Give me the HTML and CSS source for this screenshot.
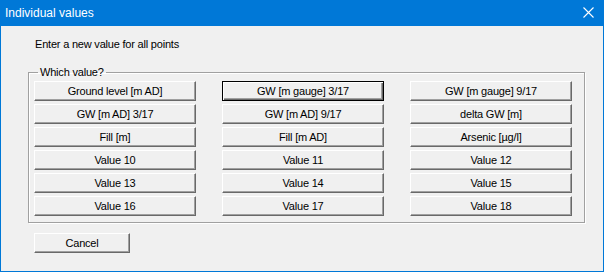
FILE: index.html
```html
<!DOCTYPE html>
<html lang="en">
  <head>
    <meta charset="UTF-8" />
    <meta name="viewport" content="width=device-width, initial-scale=1.0" />
    <title>Individual values</title>

    <link rel="stylesheet" href="styles.css">
  </head>
  <body>
    <!-- Dialog window -->
    <div class="window">
      <div class="titlebar">
        <span class="title">Individual values</span>
        <svg class="close" width="11" height="11" viewBox="0 0 11 11">
          <path d="M0.5 0.5 L10.5 10.5 M10.5 0.5 L0.5 10.5" stroke="#fff" stroke-width="1.1" fill="none" />
        </svg>
      </div>

      <div class="content">
        <p class="prompt">Enter a new value for all points</p>

        <!-- Group of value buttons -->
        <fieldset class="group">
          <legend>Which value?</legend>
          <div class="grid">
            <button class="btn">Ground level [m AD]</button>
            <button class="btn default">GW [m gauge] 3/17</button>
            <button class="btn">GW [m gauge] 9/17</button>
            <button class="btn">GW [m AD] 3/17</button>
            <button class="btn">GW [m AD] 9/17</button>
            <button class="btn">delta GW [m]</button>
            <button class="btn">Fill [m]</button>
            <button class="btn">Fill [m AD]</button>
            <button class="btn">Arsenic [µg/l]</button>
            <button class="btn">Value 10</button>
            <button class="btn">Value 11</button>
            <button class="btn">Value 12</button>
            <button class="btn">Value 13</button>
            <button class="btn">Value 14</button>
            <button class="btn">Value 15</button>
            <button class="btn">Value 16</button>
            <button class="btn">Value 17</button>
            <button class="btn">Value 18</button>
          </div>
        </fieldset>

        <button class="btn cancel">Cancel</button>
      </div>
    </div>
  </body>
</html>
```

FILE: styles.css
```css
/* Page reset */
body {
  margin: 0;
  font-family: "Liberation Sans", Arial, sans-serif;
  font-size: 11px;
  letter-spacing: -0.2px;
  color: #000;
}

/* Dialog frame */
.window {
  width: 604px;
  height: 272px;
  box-sizing: border-box;
  border: 1px solid #0078d7;
  border-top: 0;
  background: #f0f0f0;
}

/* Title bar */
.titlebar {
  height: 26px;
  background: #0078d7;
  display: flex;
  align-items: center;
  justify-content: space-between;
  padding: 0 9px 0 4px;
}

.title {
  color: #fff;
  font-size: 12px;
  letter-spacing: 0;
  margin-top: -1px;
}

.close {
  display: block;
  margin-top: -1px;
}

/* Body of the dialog */
.content {
  padding: 0 0 0 27px;
}

.prompt {
  margin: 12px 0 0 7px;
  line-height: 13px;
}

/* Group box */
.group {
  width: 557px;
  box-sizing: border-box;
  margin: 15px 0 0;
  padding: 2px 12px 6px 5px;
  border: 1px solid #a0a0a0;
  box-shadow: 1px 1px 0 #fff, inset 1px 1px 0 #fff;
}

.group legend {
  padding: 0 2px;
  margin-left: 4px;
  line-height: 13px;
}

.grid {
  display: grid;
  grid-template-columns: repeat(3, 162px);
  column-gap: 26px;
  row-gap: 3px;
}

/* Classic 3D buttons */
.btn {
  height: 20px;
  padding: 0;
  font-family: inherit;
  font-size: 11px;
  letter-spacing: -0.2px;
  color: #000;
  background: #f0f0f0;
  border: 1px solid;
  border-color: #fff #696969 #696969 #fff;
  box-shadow: inset -1px -1px 0 #a0a0a0;
  border-radius: 0;
}

/* Default button has a black frame */
.btn.default {
  border-color: #000;
  box-shadow: inset 1px 1px 0 #fff, inset -1px -1px 0 #696969, inset -2px -2px 0 #a0a0a0;
}

.cancel {
  width: 96px;
  margin: 10px 0 0 6px;
}
```
